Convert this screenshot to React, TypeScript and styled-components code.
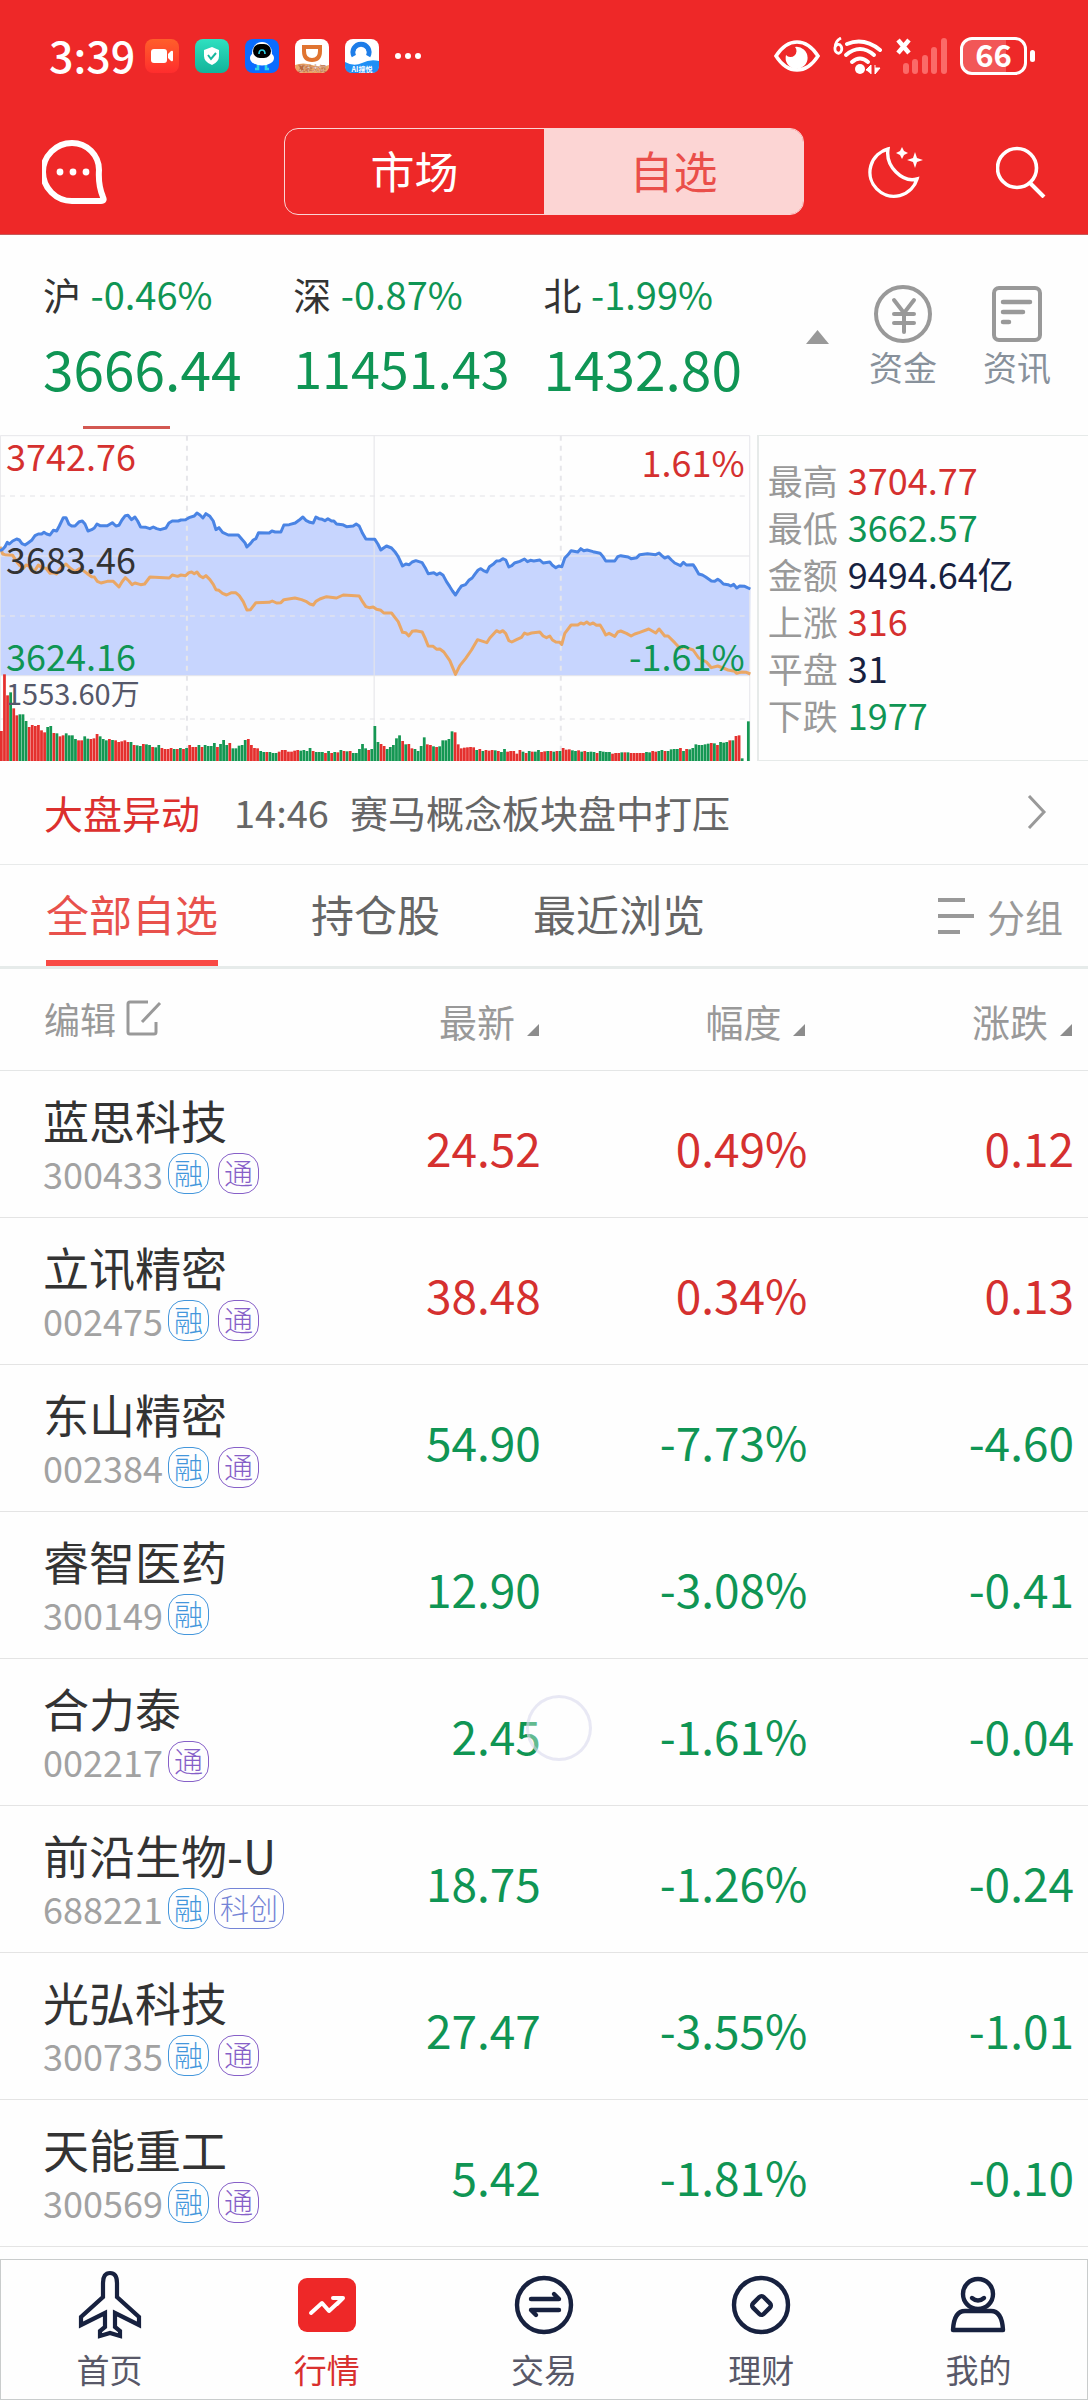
import React, { useState } from "react";
import styled, { createGlobalStyle } from "styled-components";

const RED = "#d5302f";
const GREEN = "#0f9554";
const NAVY = "#17213f";

const GlobalStyle = createGlobalStyle`
  *, *::before, *::after { box-sizing: border-box; }
  body {
    margin: 0;
    background: #fefefe;
    font-family: "Noto Sans CJK SC", "Noto Sans", sans-serif;
    color: #333;
  }
  button {
    font: inherit;
    color: inherit;
    background: none;
    border: 0;
    padding: 0;
    margin: 0;
    cursor: pointer;
  }
  a { color: inherit; text-decoration: none; }
  svg { display: block; flex: none; }
`;

const Page = styled.div`
  position: relative;
  width: 100%;
`;

/* ---------- header ---------- */

const Header = styled.header`
  background: #ee2828;
  color: #fff;
  border-bottom: 1px solid #c65a5a;
`;

const StatusBar = styled.div`
  display: flex;
  align-items: center;
  justify-content: space-between;
  height: 112px;
  padding: 0 53px 0 49px;
`;

const StatusGroup = styled.div<{ $gap: number }>`
  display: flex;
  align-items: center;
  gap: ${(p) => p.$gap}px;
`;

const Clock = styled.time`
  font-size: 43px;
  line-height: 60px;
  font-weight: 500;
  padding-bottom: 4px;
  margin-right: -6px;
`;

const Battery = styled.div`
  display: flex;
  align-items: center;
  gap: 3px;

  &::after {
    content: "";
    width: 5px;
    height: 12px;
    border-radius: 3px;
    background: #fff;
  }
`;

const BatteryCell = styled.div`
  width: 67px;
  height: 38px;
  border: 3px solid #fff;
  border-radius: 12px;
  background: linear-gradient(90deg, #f25757 70%, #ee2828 70%);
  display: flex;
  align-items: center;
  justify-content: center;
  font-size: 31px;
  line-height: 32px;
  font-weight: 700;
  padding-bottom: 4px;
`;

const NavBar = styled.nav`
  display: grid;
  grid-template-columns: 1fr minmax(0, 520px) 1fr;
  align-items: center;
  padding: 16px 42px 19px;
`;

const NavActions = styled.div`
  display: flex;
  justify-content: flex-end;
  gap: 72px;
`;

const Segmented = styled.div`
  display: flex;
  height: 87px;
  border: 1px solid #fbd5d5;
  border-radius: 14px;
  overflow: hidden;
`;

const Segment = styled.button<{ $active?: boolean }>`
  flex: 1;
  font-size: 44px;
  line-height: 60px;
  padding-bottom: 4px;
  color: ${(p) => (p.$active ? "#ea4f4a" : "#fff")};
  background: ${(p) => (p.$active ? "#fcd5d4" : "transparent")};
`;

/* ---------- indices ---------- */

const IndexStrip = styled.section`
  display: flex;
  justify-content: space-between;
`;

const Quotes = styled.div`
  flex: 0 0 69%;
  display: grid;
  grid-template-columns: repeat(3, minmax(0, 1fr));
`;

const Quote = styled.button<{ $active?: boolean }>`
  display: flex;
  flex-direction: column;
  gap: 16px;
  padding: 34px 0 6px 43px;
  text-align: left;
  white-space: nowrap;

  &::after {
    content: "";
    width: 87px;
    height: 3px;
    margin: 11px 0 0 40px;
    background: ${(p) => (p.$active ? "#d35852" : "transparent")};
  }
`;

const QuoteChange = styled.span`
  font-size: 38px;
  line-height: 50px;
  color: ${GREEN};
`;

const QuoteName = styled.span`
  margin-right: 1px;
  color: #333;
`;

const QuoteValue = styled.span<{ $small?: boolean }>`
  font-size: ${(p) => (p.$small ? 52 : 55)}px;
  line-height: 64px;
  color: ${GREEN};
`;

const Tools = styled.div`
  display: flex;
  align-items: flex-start;
  gap: 46px;
  padding: 49px 37px 0 0;
`;

const Collapse = styled.button`
  padding-top: 46px;
  margin-right: -6px;
`;

const Tool = styled.button`
  display: flex;
  flex-direction: column;
  align-items: center;
  font-size: 34px;
  line-height: 46px;
  color: #88919b;
`;

/* ---------- chart ---------- */

const MarketPanel = styled.section`
  display: flex;
`;

const ChartBox = styled.figure`
  position: relative;
  flex: 0 0 69%;
  margin: 0;

  svg {
    width: 100%;
    height: 326px;
  }
`;

const ChartLabels = styled.div`
  position: absolute;
  inset: 0;
  display: flex;
  flex-direction: column;
  padding: 0 6px;
  font-size: 36px;
  line-height: 40px;
`;

const LabelRow = styled.div<{ $height: number }>`
  display: flex;
  justify-content: space-between;
  align-items: flex-start;
  height: ${(p) => p.$height}px;
`;

const ChartLabel = styled.span<{ $color: string; $drop?: boolean }>`
  color: ${(p) => p.$color};
  padding-top: ${(p) => (p.$drop ? 6 : 0)}px;
`;

const VolumeLabel = styled.span`
  font-size: 29px;
  line-height: 32px;
  color: #55586a;
`;

const Stats = styled.dl`
  flex: 1;
  display: grid;
  grid-template-columns: auto 1fr;
  column-gap: 10px;
  align-content: start;
  margin: 0 0 0 6px;
  padding: 20px 0 0 9px;
  border: 1px solid #e6eae9;
  border-left-width: 2px;
  border-right: 0;
  line-height: 47px;
`;

const StatLabel = styled.dt`
  font-size: 35px;
  color: #999;
`;

const StatValue = styled.dd<{ $color: string }>`
  margin: 0;
  font-size: 36px;
  color: ${(p) => p.$color};
`;

/* ---------- news and tabs ---------- */

const News = styled.a`
  display: flex;
  align-items: center;
  height: 104px;
  padding: 0 41px 2px 44px;
  border-bottom: 1px solid #e8eaea;
  font-size: 38px;
  line-height: 56px;
  color: #666;
`;

const NewsTag = styled.strong`
  font-size: 39px;
  font-weight: 400;
  color: #dc302e;
  margin-right: 34px;
`;

const NewsTime = styled.time`
  margin-right: 21px;
`;

const NewsTitle = styled.span`
  flex: 1;
`;

const Tabs = styled.div`
  display: flex;
  align-items: stretch;
  gap: 93px;
  height: 104px;
  padding: 0 25px 0 46px;
  border-bottom: 3px solid #e6ebea;
`;

const Tab = styled.button<{ $active?: boolean }>`
  font-size: 43px;
  line-height: 60px;
  color: ${(p) => (p.$active ? "#e8514c" : "#666")};
  border-bottom: 6px solid ${(p) => (p.$active ? "#f94a45" : "transparent")};
`;

const GroupButton = styled.button`
  display: flex;
  align-items: center;
  gap: 13px;
  margin-left: auto;
  font-size: 38px;
  color: #999;
`;

/* ---------- table ---------- */

const StockTable = styled.table`
  width: 100%;
  table-layout: fixed;
  border-collapse: separate;
  border-spacing: 0;
`;

const Th = styled.th<{ $first?: boolean }>`
  width: ${(p) => (p.$first ? "auto" : "24.5%")};
  height: 102px;
  padding: ${(p) => (p.$first ? "0 0 4px 44px" : "2px 16px 0 0")};
  border-bottom: 1px solid #e4e6e6;
  font-weight: 400;
  color: #999;
`;

const EditButton = styled.button`
  display: flex;
  align-items: center;
  gap: 10px;
  font-size: 36px;
  line-height: 50px;
`;

const SortButton = styled.button`
  display: flex;
  align-items: center;
  gap: 12px;
  margin-left: auto;
  font-size: 38px;
  line-height: 50px;

  svg { margin-top: 18px; }
`;

const NameCell = styled.td`
  height: 147px;
  padding: 0 0 2px 43px;
  border-bottom: 1px solid #e4e4e4;
  white-space: nowrap;
`;

const ValueCell = styled.td<{ $color: string }>`
  padding: 5px 14px 0 0;
  border-bottom: 1px solid #e4e4e4;
  text-align: right;
  font-size: 46px;
  line-height: 60px;
  color: ${(p) => p.$color};
`;

const StockName = styled.div`
  font-size: 46px;
  line-height: 60px;
  color: #333;
`;

const StockMeta = styled.div`
  display: flex;
  align-items: center;
  font-size: 36px;
  line-height: 48px;
  color: #a2a2a2;
`;

const Badge = styled.span<{ $color: string; $gap: number }>`
  display: inline-flex;
  align-items: center;
  justify-content: center;
  height: 41px;
  padding: 0 5px 3px;
  margin-left: ${(p) => p.$gap}px;
  border: 1px solid ${(p) => p.$color};
  border-radius: 16px;
  font-size: 29px;
  line-height: 36px;
  font-weight: 300;
  color: ${(p) => p.$color};

  &:first-of-type { margin-left: 5px; }
`;

const TouchRing = styled.div`
  position: absolute;
  left: 526px;
  top: 1695px;
  width: 66px;
  height: 66px;
  border: 3px solid rgba(210, 210, 234, 0.5);
  border-radius: 50%;
  background: rgba(255, 255, 255, 0.35);
  pointer-events: none;
`;

/* ---------- bottom bar ---------- */

const BottomBar = styled.nav`
  display: grid;
  grid-template-columns: repeat(5, 1fr);
  height: 141px;
  margin-top: 12px;
  border: 1px solid #c9cccc;
`;

const BottomItem = styled.a<{ $active?: boolean }>`
  display: flex;
  flex-direction: column;
  align-items: center;
  padding-top: 10px;
  font-size: 33px;
  line-height: 46px;
  gap: 6px;
  color: ${(p) => (p.$active ? "#d9302e" : "#585868")};
`;

/* ---------- drawings ---------- */

const VideoApp = () => (
  <svg width="34" height="34" viewBox="0 0 34 34">
    <defs>
      <linearGradient id="video" x1="0" y1="0" x2="0" y2="1">
        <stop offset="0" stopColor="#ff5f2a" />
        <stop offset="1" stopColor="#ff2d2d" />
      </linearGradient>
    </defs>
    <rect width="34" height="34" rx="8" fill="url(#video)" />
    <rect x="6" y="10" width="16" height="14" rx="3" fill="#fff" />
    <path d="M23 15 L26 12 Q28 11 28 13 V21 Q28 23 26 22 L23 19 Z" fill="#fff" />
  </svg>
);

const ShieldApp = () => (
  <svg width="34" height="34" viewBox="0 0 34 34">
    <defs>
      <linearGradient id="shield" x1="0" y1="0" x2="0" y2="1">
        <stop offset="0" stopColor="#2fe0c0" />
        <stop offset="1" stopColor="#12b39a" />
      </linearGradient>
    </defs>
    <rect width="34" height="34" rx="8" fill="url(#shield)" />
    <path d="M17 8 L24 11 V17 Q24 23 17 26 Q9 23 9 17 V11 Z" fill="#fff" />
    <path d="M13 16 L16 20 L21 14" fill="none" stroke="#18b79e" strokeWidth="2" />
  </svg>
);

const RobotApp = () => (
  <svg width="34" height="34" viewBox="0 0 34 34">
    <rect width="34" height="34" rx="8" fill="#0a6cff" />
    <path d="M13 26 V30 H10 M21 26 V30 H24" fill="none" stroke="#2fd3e6" strokeWidth="2.6" />
    <ellipse cx="17" cy="19" rx="12" ry="7.5" fill="#fff" />
    <ellipse cx="17" cy="14" rx="10" ry="11" fill="#fff" />
    <rect x="8" y="5" width="18" height="14" rx="7" fill="#000" />
    <path d="M14 15 Q14 11 17 11 T20 15" fill="none" stroke="#2fd3e6" strokeWidth="1.6" />
  </svg>
);

const RideApp = () => (
  <svg width="34" height="34" viewBox="0 0 34 34">
    <rect width="34" height="34" rx="8" fill="#fff" />
    <path d="M0 26 Q8 23 17 26 T34 26 Q34 34 26 34 H8 Q0 34 0 26 Z" fill="#eda565" />
    <path d="M9 8 H25 V12 Q25 21 17 21 Q9 21 9 12 Z" fill="none" stroke="#e07430" strokeWidth="4" />
    <text x="17" y="32" fontSize="7" fontWeight="700" textAnchor="middle" fill="#fff" stroke="#b9683c" strokeWidth="0.4">夏季大促</text>
  </svg>
);

const BrowserApp = () => (
  <svg width="34" height="34" viewBox="0 0 34 34">
    <rect width="34" height="34" rx="8" fill="#fff" />
    <path d="M0 23 Q9 28 17 24 T34 22 V27 Q34 34 27 34 H7 Q0 34 0 27 Z" fill="#1f8ff5" />
    <path d="M9 17 A8 8 0 1 1 23 17" fill="none" stroke="#1d7de8" strokeWidth="5" />
    <circle cx="16" cy="14" r="5.5" fill="#fff" />
    <text x="17" y="33" fontSize="7" fontWeight="700" textAnchor="middle" fill="#fff">AI搜悦</text>
  </svg>
);

const MoreDots = () => (
  <svg width="26" height="8" viewBox="0 0 26 8" fill="#fff">
    <circle cx="3" cy="4" r="3" />
    <circle cx="13" cy="4" r="3" />
    <circle cx="23" cy="4" r="3" />
  </svg>
);

const EyeIcon = () => (
  <svg width="46" height="34" viewBox="0 0 46 34">
    <path d="M2 17 Q11 3 23 3 T44 17 Q35 31 23 31 T2 17 Z" fill="none" stroke="#fff" strokeWidth="3.5" />
    <path d="M21 8 A11 11 0 1 1 12 16 A6 6 0 1 0 21 8 Z" fill="#fff" />
  </svg>
);

const WifiIcon = () => (
  <svg width="50" height="38" viewBox="0 0 50 38">
    <g fill="none" stroke="#fff" strokeWidth="4" strokeLinecap="round">
      <path d="M14 7 Q31 0 47 13" />
      <path d="M13 18 Q27 6 41 18" />
      <path d="M19 25 Q27 18 35 25" />
    </g>
    <circle cx="27" cy="32" r="5" fill="#fff" />
    <path d="M33 33 L38 28 V37 M38 33 H33 M42 28 V37 L47 31 H42" fill="#fff" stroke="#fff" strokeWidth="1" />
    <path d="M8 1 Q2 4 2 11 A3.4 4.4 0 1 0 2.4 9.6" fill="none" stroke="#fff" strokeWidth="2.8" />
  </svg>
);

const SignalIcon = () => (
  <svg width="51" height="36" viewBox="0 0 51 36">
    <g fill="#fb6a68">
      <rect x="7" y="25" width="6" height="11" rx="3" />
      <rect x="16" y="21" width="6" height="15" rx="3" />
      <rect x="26" y="17" width="6" height="19" rx="3" />
      <rect x="35" y="9" width="6" height="27" rx="3" />
      <rect x="45" y="0" width="6" height="36" rx="3" />
    </g>
    <path d="M2 2 L13 15 M13 2 L2 15" stroke="#fff" strokeWidth="4.5" />
  </svg>
);

const ChatIcon = () => (
  <svg width="66" height="64" viewBox="0 0 66 64">
    <path d="M30 3 A27 27 0 0 1 57 30 Q56 45 61 57 Q63 61 59 61 H30 A29 29 0 0 1 30 3 Z" fill="none" stroke="#fff" strokeWidth="6" strokeLinejoin="round" />
    <g fill="#fff">
      <circle cx="18" cy="32" r="3.4" />
      <circle cx="31" cy="32" r="3.4" />
      <circle cx="44" cy="32" r="3.4" />
    </g>
  </svg>
);

const MoonIcon = () => (
  <svg width="56" height="52" viewBox="0 0 56 52">
    <path d="M20 3 A24 24 0 1 0 49 33 Q38 36 28 26 Q18 16 20 3 Z" fill="none" stroke="#fff" strokeWidth="3.4" />
    <path d="M34 1 L36 5 L40 7 L36 9 L34 13 L32 9 L28 7 L32 5 Z" fill="#fff" />
    <path d="M47 6 L49 12 L55 14 L49 16 L47 22 L45 16 L39 14 L45 12 Z" fill="#fff" />
  </svg>
);

const SearchIcon = () => (
  <svg width="50" height="52" viewBox="0 0 50 52" fill="none" stroke="#fff" strokeWidth="3.6">
    <circle cx="21" cy="22" r="19.5" />
    <path d="M34 37 L48 51" strokeWidth="4" />
  </svg>
);

const MoneyIcon = () => (
  <svg width="60" height="60" viewBox="0 0 60 60" fill="none" stroke="#999" strokeWidth="4" strokeLinecap="round">
    <circle cx="30" cy="30" r="27" />
    <path d="M21 16 L31 29 L41 16 M31 29 V48 M21 30 H41 M21 39 H41" />
  </svg>
);

const DocIcon = () => (
  <svg width="60" height="60" viewBox="0 0 60 60" fill="none" stroke="#999" strokeWidth="4" strokeLinecap="round">
    <rect x="7" y="4" width="46" height="52" rx="5" />
    <path d="M16 18 H43 M16 28 H36 M16 38 H22" strokeWidth="4.5" />
  </svg>
);

const UpTriangle = () => (
  <svg width="23" height="14" viewBox="0 0 23 14">
    <path d="M11.5 0 L23 14 H0 Z" fill="#999" />
  </svg>
);

const ChevronIcon = () => (
  <svg width="20" height="34" viewBox="0 0 20 34" fill="none" stroke="#999" strokeWidth="3">
    <path d="M2 1 L17 17 L2 33" />
  </svg>
);

const GroupIcon = () => (
  <svg width="36" height="38" viewBox="0 0 36 38" fill="#999">
    <rect x="0" y="1" width="27" height="4" />
    <rect x="0" y="17" width="36" height="4" />
    <rect x="0" y="33" width="22" height="4" />
  </svg>
);

const EditIcon = () => (
  <svg width="36" height="36" viewBox="0 0 36 36" fill="none" stroke="#999" strokeWidth="3">
    <path d="M22 2 H4 Q2 2 2 4 V32 Q2 34 4 34 H28 Q30 34 30 32 V22" />
    <path d="M16 22 L34 3" />
  </svg>
);

const SortMark = () => (
  <svg width="12" height="12" viewBox="0 0 12 12">
    <path d="M12 0 V12 H0 Z" fill="#8c8c8c" />
  </svg>
);

const PlaneIcon = () => (
  <svg width="66" height="70" viewBox="0 0 66 70">
    <path d="M26 13 Q26 3 33 3 T40 13 V27 L62 47 V55 L38 43 L38 57 L43 61 V66 L33 63 L23 66 V61 L28 57 L28 43 L4 55 V47 L26 27 Z" fill="none" stroke={NAVY} strokeWidth="4.2" />
  </svg>
);

const MarketIcon = () => (
  <svg width="66" height="70" viewBox="0 0 66 70">
    <rect x="4" y="8" width="58" height="54" rx="9" fill="#ee2828" />
    <path d="M17 43 L28 33 L35 41 L48 29 M39 28 H49 L43 34" fill="none" stroke="#fff" strokeWidth="4" strokeLinecap="round" strokeLinejoin="round" />
  </svg>
);

const TradeIcon = () => (
  <svg width="66" height="70" viewBox="0 0 66 70" fill="none" stroke={NAVY} strokeWidth="4.4" strokeLinecap="round" strokeLinejoin="round">
    <circle cx="33" cy="35" r="27" />
    <path d="M20 29 H48 L43 24 M48 40 H20 L25 45" />
  </svg>
);

const WealthIcon = () => (
  <svg width="66" height="70" viewBox="0 0 66 70" fill="none" stroke={NAVY} strokeWidth="4.4" strokeLinejoin="round">
    <circle cx="33" cy="35" r="27" />
    <rect x="26" y="28" width="15" height="15" rx="3" transform="rotate(45 33.5 35.5)" />
  </svg>
);

const UserIcon = () => (
  <svg width="66" height="70" viewBox="0 0 66 70" fill="none" stroke={NAVY} strokeWidth="4.4" strokeLinecap="round" strokeLinejoin="round">
    <circle cx="33" cy="24" r="15" />
    <path d="M27 28 Q33 33 39 28" />
    <path d="M8 60 Q9 41 20 41 H46 Q57 41 58 60 Z" />
  </svg>
);

/* ---------- chart data: three units to a pixel ---------- */

const priceLine =
  "0,392 8,388 15,380 22,367 28,372 38,363 50,357 58,360 66,371 75,375 85,368 95,361 105,347 115,342 125,342 132,337 140,342 150,345 160,331 170,333 178,318 190,293 198,293 207,313 215,318 225,318 238,305 247,303 255,312 264,333 275,329 283,324 291,312 300,317 322,317 337,308 348,318 357,316 366,300 376,287 384,286 395,299 405,291 413,303 422,321 438,322 450,326 460,321 470,326 481,329 498,324 507,309 517,303 535,303 543,300 557,299 567,293 583,288 591,279 600,285 609,294 618,281 630,289 640,303 648,329 657,323 668,337 685,345 715,345 726,358 735,368 741,381 752,370 760,360 768,356 776,338 808,339 816,333 826,336 843,336 852,315 868,314 886,309 897,301 909,291 918,301 930,307 940,309 948,291 957,296 967,298 975,302 984,296 995,303 1002,303 1010,312 1028,314 1040,320 1060,318 1069,312 1078,318 1088,340 1098,357 1125,358 1134,372 1143,390 1150,385 1160,378 1175,384 1185,395 1195,410 1208,438 1218,432 1228,434 1237,426 1248,422 1267,428 1276,443 1285,461 1302,458 1311,464 1320,459 1330,466 1340,485 1350,500 1358,513 1367,525 1377,509 1385,498 1397,494 1407,481 1417,474 1427,460 1435,450 1443,446 1451,452 1461,456 1469,440 1482,431 1490,423 1500,422 1509,416 1518,420 1527,441 1536,437 1544,429 1560,424 1574,417 1583,425 1592,421 1602,423 1620,420 1630,429 1650,426 1658,436 1668,443 1677,438 1686,440 1695,414 1705,404 1714,392 1734,396 1743,386 1752,392 1762,390 1780,395 1801,400 1810,410 1818,423 1845,423 1854,410 1863,407 1885,411 1894,416 1911,413 1920,404 1943,401 1968,404 1978,399 1986,407 1995,414 2005,410 2015,420 2025,429 2042,437 2051,427 2060,435 2080,434 2088,446 2097,462 2108,465 2118,471 2135,483 2145,484 2154,478 2162,483 2171,492 2185,494 2193,498 2202,493 2211,504 2220,498 2235,499 2252,507";

const averageLine =
  "0,380 8,402 15,404 38,406 50,425 60,437 70,445 78,435 92,440 102,456 115,435 125,443 138,445 150,460 160,458 170,462 180,447 198,432 210,444 225,455 238,446 250,452 262,461 275,470 283,471 292,484 303,489 322,484 340,484 357,501 366,486 376,473 387,483 396,494 405,489 422,494 434,492 450,471 508,474 517,465 533,469 543,465 557,467 567,458 575,456 583,461 591,456 600,468 609,473 618,467 630,479 640,493 648,509 657,511 668,520 680,525 695,518 707,518 718,527 730,545 741,570 752,569 768,548 808,547 817,543 830,549 843,548 852,539 885,534 905,539 918,544 930,552 940,555 948,544 960,537 980,530 1010,534 1030,525 1078,528 1088,545 1098,560 1108,563 1120,561 1130,568 1143,571 1152,579 1175,579 1185,592 1195,605 1208,637 1218,638 1227,648 1237,634 1248,632 1267,636 1276,655 1285,678 1300,679 1311,688 1320,687 1332,696 1350,722 1367,763 1380,737 1397,716 1415,690 1433,659 1461,668 1470,654 1490,632 1500,637 1509,632 1518,641 1527,662 1536,666 1550,659 1565,652 1574,639 1583,643 1595,639 1620,636 1630,648 1640,653 1650,648 1658,660 1668,666 1680,667 1686,673 1695,640 1714,615 1734,615 1743,609 1752,612 1761,606 1770,613 1780,609 1790,616 1801,615 1810,630 1818,645 1828,640 1845,649 1854,636 1863,633 1880,640 1894,648 1905,642 1920,637 1947,627 1968,639 1978,627 1995,648 2005,648 2025,668 2042,686 2051,680 2080,690 2097,714 2120,726 2135,743 2154,738 2170,744 2185,750 2205,754 2211,760 2225,756 2240,757 2252,762";

const volume =
  "r90 r260 r197 g206 r158 r137 g140 g140 g120 r102 r108 r105 r108 r92 r86 g102 g105 r84 g83 r74 r77 g83 g77 g77 g66 r62 r62 g74 g67 r66 r68 r81 g74 g66 g62 r66 g63 r62 r57 r59 r62 r57 g57 r48 g47 g45 r51 g50 g48 r42 g41 g48 r39 r36 r36 r39 g36 r36 g39 r36 g39 r48 r42 r42 g48 r42 g48 g45 g45 g54 r42 g51 g63 g48 r54 g38 g38 g46 g48 g63 r66 r48 r39 r38 g30 g27 r27 g27 g24 g24 r28 r33 r33 r28 r28 r31 r33 g31 g33 g30 g39 r30 g27 g27 g27 r24 g30 r24 g27 r26 g33 r30 g29 r30 g24 g24 g36 g51 g38 r33 g36 g105 g57 r51 r45 g36 g42 g48 g68 g77 r60 g50 r51 r38 g36 g30 g45 g71 r50 r48 g44 r42 g44 g62 g62 g66 g89 r86 r50 r38 r40 r41 r42 r41 g33 r36 g30 r33 r31 r33 g32 r30 g27 g36 r28 r30 r30 r22 r33 g28 r24 g30 r28 g28 g33 r27 r29 g30 r30 g28 r30 g30 r39 r34 r35 g32 g30 r32 g28 r30 g27 g28 g27 r24 g30 g28 g27 g27 r22 r24 r24 g26 r26 g26 r24 r24 r24 r24 r24 g27 g26 r30 r28 g30 g33 r30 g30 g35 g36 g36 r39 g30 r36 g35 g39 g50 g48 g48 g50 g52 r54 g53 r48 g57 g55 g57 r62 g62 r75 r77 g8 g0 g119"
    .split(" ")
    .map((v) => ({ up: v[0] === "r", h: Number(v.slice(1)) }));

const CHART_W = 2253;
const BASE = 1023;

const MarketChart = () => {
  const step = (CHART_W - 2) / volume.length;
  return (
    <svg viewBox={`0 45 ${CHART_W} 978`} preserveAspectRatio="none" aria-hidden="true">
      <polygon points={`0,767 ${priceLine} 2250,767`} fill="#c7d5fe" />
      <g stroke="#e6e6ea" strokeWidth="4" fill="none">
        <path d={`M1 ${BASE} V47 H2250 V${BASE}`} strokeWidth="3" />
        <path d="M0 408 H2250 M0 767 H2250 M1123 47 V1023" strokeOpacity="0.8" />
        <path d="M0 228 H2250 M0 588 H2250 M0 897 H2250" strokeDasharray="15 15" strokeOpacity="0.8" />
        <path d="M561 47 V1023 M1683 47 V1023" strokeWidth="6" strokeDasharray="15 15" />
      </g>
      <polyline points={averageLine} fill="none" stroke="#eaa765" strokeWidth="9" strokeLinejoin="round" />
      <polyline points={priceLine} fill="none" stroke="#4a84e4" strokeWidth="9" strokeLinejoin="round" />
      {volume.map((bar, i) => (
        <rect
          key={i}
          x={i * step}
          y={BASE - bar.h}
          width={step - 1}
          height={bar.h}
          fill={bar.up ? "#e5302e" : "#159753"}
        />
      ))}
    </svg>
  );
};

/* ---------- content ---------- */

const indices = [
  { name: "沪", change: "-0.46%", value: "3666.44" },
  { name: "深", change: "-0.87%", value: "11451.43" },
  { name: "北", change: "-1.99%", value: "1432.80" },
];

const stats = [
  { label: "最高", value: "3704.77", color: RED },
  { label: "最低", value: "3662.57", color: GREEN },
  { label: "金额", value: "9494.64亿", color: NAVY },
  { label: "上涨", value: "316", color: RED },
  { label: "平盘", value: "31", color: NAVY },
  { label: "下跌", value: "1977", color: GREEN },
];

const badgeStyles: Record<string, { color: string; gap: number }> = {
  融: { color: "#4396dc", gap: 5 },
  通: { color: "#8660c8", gap: 9 },
  科创: { color: "#7484d6", gap: 5 },
};

const stocks = [
  { name: "蓝思科技", code: "300433", tags: ["融", "通"], values: ["24.52", "0.49%", "0.12"] },
  { name: "立讯精密", code: "002475", tags: ["融", "通"], values: ["38.48", "0.34%", "0.13"] },
  { name: "东山精密", code: "002384", tags: ["融", "通"], values: ["54.90", "-7.73%", "-4.60"] },
  { name: "睿智医药", code: "300149", tags: ["融"], values: ["12.90", "-3.08%", "-0.41"] },
  { name: "合力泰", code: "002217", tags: ["通"], values: ["2.45", "-1.61%", "-0.04"] },
  { name: "前沿生物-U", code: "688221", tags: ["融", "科创"], values: ["18.75", "-1.26%", "-0.24"] },
  { name: "光弘科技", code: "300735", tags: ["融", "通"], values: ["27.47", "-3.55%", "-1.01"] },
  { name: "天能重工", code: "300569", tags: ["融", "通"], values: ["5.42", "-1.81%", "-0.10"] },
];

const bottomItems = [
  { label: "首页", Icon: PlaneIcon },
  { label: "行情", Icon: MarketIcon },
  { label: "交易", Icon: TradeIcon },
  { label: "理财", Icon: WealthIcon },
  { label: "我的", Icon: UserIcon },
];

export default function App() {
  const [segment, setSegment] = useState("自选");
  const [index, setIndex] = useState("沪");
  const [tab, setTab] = useState("全部自选");

  return (
    <Page>
      <GlobalStyle />
      <Header>
        <StatusBar>
          <StatusGroup $gap={16}>
            <Clock>3:39</Clock>
            <VideoApp />
            <ShieldApp />
            <RobotApp />
            <RideApp />
            <BrowserApp />
            <MoreDots />
          </StatusGroup>
          <StatusGroup $gap={13}>
            <EyeIcon />
            <WifiIcon />
            <SignalIcon />
            <Battery>
              <BatteryCell>66</BatteryCell>
            </Battery>
          </StatusGroup>
        </StatusBar>
        <NavBar>
          <button aria-label="消息">
            <ChatIcon />
          </button>
          <Segmented>
            {["市场", "自选"].map((s) => (
              <Segment key={s} $active={s === segment} onClick={() => setSegment(s)}>
                {s}
              </Segment>
            ))}
          </Segmented>
          <NavActions>
            <button aria-label="夜间模式">
              <MoonIcon />
            </button>
            <button aria-label="搜索">
              <SearchIcon />
            </button>
          </NavActions>
        </NavBar>
      </Header>

      <main>
        <IndexStrip>
          <Quotes>
            {indices.map((q) => (
              <Quote key={q.name} $active={q.name === index} onClick={() => setIndex(q.name)}>
                <QuoteChange>
                  <QuoteName>{q.name}</QuoteName> {q.change}
                </QuoteChange>
                <QuoteValue $small={q.value.length > 7}>{q.value}</QuoteValue>
              </Quote>
            ))}
          </Quotes>
          <Tools>
            <Collapse aria-label="收起">
              <UpTriangle />
            </Collapse>
            <Tool>
              <MoneyIcon />
              资金
            </Tool>
            <Tool>
              <DocIcon />
              资讯
            </Tool>
          </Tools>
        </IndexStrip>

        <MarketPanel>
          <ChartBox>
            <MarketChart />
            <ChartLabels>
              <LabelRow $height={103}>
                <ChartLabel $color={RED}>3742.76</ChartLabel>
                <ChartLabel $color={RED} $drop>1.61%</ChartLabel>
              </LabelRow>
              <LabelRow $height={97}>
                <ChartLabel $color="#333">3683.46</ChartLabel>
              </LabelRow>
              <LabelRow $height={41}>
                <ChartLabel $color={GREEN}>3624.16</ChartLabel>
                <ChartLabel $color={GREEN}>-1.61%</ChartLabel>
              </LabelRow>
              <VolumeLabel>1553.60万</VolumeLabel>
            </ChartLabels>
          </ChartBox>
          <Stats>
            {stats.map((s) => (
              <React.Fragment key={s.label}>
                <StatLabel>{s.label}</StatLabel>
                <StatValue $color={s.color}>{s.value}</StatValue>
              </React.Fragment>
            ))}
          </Stats>
        </MarketPanel>

        <News href="#news">
          <NewsTag>大盘异动</NewsTag>
          <NewsTime>14:46</NewsTime>
          <NewsTitle>赛马概念板块盘中打压</NewsTitle>
          <ChevronIcon />
        </News>

        <Tabs>
          {["全部自选", "持仓股", "最近浏览"].map((t) => (
            <Tab key={t} $active={t === tab} onClick={() => setTab(t)}>
              {t}
            </Tab>
          ))}
          <GroupButton>
            <GroupIcon />
            分组
          </GroupButton>
        </Tabs>

        <StockTable>
          <thead>
            <tr>
              <Th $first>
                <EditButton>
                  编辑
                  <EditIcon />
                </EditButton>
              </Th>
              {["最新", "幅度", "涨跌"].map((h) => (
                <Th key={h}>
                  <SortButton>
                    {h}
                    <SortMark />
                  </SortButton>
                </Th>
              ))}
            </tr>
          </thead>
          <tbody>
            {stocks.map((s) => (
              <tr key={s.code}>
                <NameCell>
                  <StockName>{s.name}</StockName>
                  <StockMeta>
                    {s.code}
                    {s.tags.map((t) => (
                      <Badge key={t} $color={badgeStyles[t].color} $gap={badgeStyles[t].gap}>
                        {t}
                      </Badge>
                    ))}
                  </StockMeta>
                </NameCell>
                {s.values.map((v, i) => (
                  <ValueCell key={i} $color={s.values[1].startsWith("-") ? GREEN : RED}>
                    {v}
                  </ValueCell>
                ))}
              </tr>
            ))}
          </tbody>
        </StockTable>
      </main>

      <TouchRing />

      <BottomBar>
        {bottomItems.map(({ label, Icon }) => (
          <BottomItem key={label} href={`#${label}`} $active={label === "行情"}>
            <Icon />
            {label}
          </BottomItem>
        ))}
      </BottomBar>
    </Page>
  );
}
